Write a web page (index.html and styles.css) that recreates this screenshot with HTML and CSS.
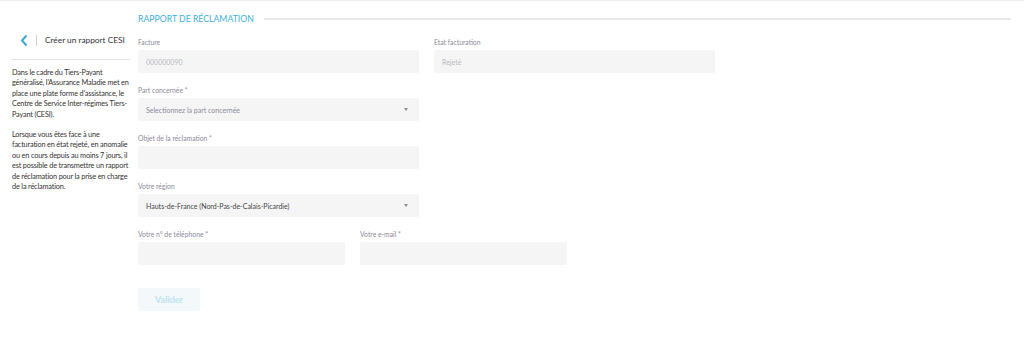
FILE: index.html
```html
<!DOCTYPE html>
<html lang="fr">
<head>
    <meta charset="UTF-8">
    <meta name="viewport" content="width=device-width, initial-scale=1.0">
    <title>Rapport de réclamation</title>
    <link rel="stylesheet" href="styles.css">
</head>
<body>
    <div class="page">
        <aside class="sidebar">
            <div class="sidebar-head">
                <a class="back" href="#">
                    <svg width="8" height="13" viewBox="0 0 8 13"><path d="M6.5 1.5 L2 6.5 L6.5 11.5" fill="none" stroke="#3ea6d6" stroke-width="2"/></svg>
                </a>
                <span class="sep"></span>
                <span class="sidebar-title">Créer un rapport CESI</span>
            </div>
            <p>Dans le cadre du Tiers-Payant généralisé, l'Assurance Maladie met en place une plate forme d'assistance, le Centre de Service Inter-régimes Tiers-Payant (CESI).</p>
            <p>Lorsque vous êtes face à une facturation en état rejeté, en anomalie ou en cours depuis au moins 7 jours, il est possible de transmettre un rapport de réclamation pour la prise en charge de la réclamation.</p>
        </aside>

        <main class="content">
            <h1 class="section-title"><span>RAPPORT DE RÉCLAMATION</span></h1>

            <form class="form-grid">
                <div class="field span-4">
                    <label>Facture</label>
                    <input type="text" value="000000090" disabled>
                </div>
                <div class="field span-4">
                    <label>Etat facturation</label>
                    <input type="text" value="Rejeté" disabled>
                </div>

                <div class="field span-4 row-start">
                    <label>Part concernée *</label>
                    <div class="select placeholder">Selectionnez la part concernée</div>
                </div>

                <div class="field span-4 row-start">
                    <label>Objet de la réclamation *</label>
                    <input type="text">
                </div>

                <div class="field span-4 row-start">
                    <label>Votre région</label>
                    <div class="select">Hauts-de-France (Nord-Pas-de-Calais-Picardie)</div>
                </div>

                <div class="field span-3 row-start">
                    <label>Votre n° de téléphone *</label>
                    <input type="text">
                </div>
                <div class="field span-3">
                    <label>Votre e-mail *</label>
                    <input type="text">
                </div>

                <div class="actions row-start">
                    <button type="button" disabled>Valider</button>
                </div>
            </form>
        </main>
    </div>
</body>
</html>
```

FILE: styles.css
```css
html, body {
    margin: 0;
    padding: 0;
}
body {
    font-family: Lato, "Open Sans", sans-serif;
    color: #3a3a3a;
    background: #fff;
    border-top: 1px solid #ececec;
}
.page {
    display: flex;
    gap: 8px;
    padding: 0 13px 0 12px;
}
.sidebar {
    width: 118px;
    flex-shrink: 0;
    padding-top: 32px;
}
.sidebar-head {
    display: flex;
    align-items: center;
    height: 14px;
    padding: 0 0 12px 8px;
    border-bottom: 1px solid #e3e3e3;
}
.back {
    display: flex;
}
.sep {
    width: 1px;
    height: 11px;
    background: #cfcfcf;
    margin: 0 8px;
}
.sidebar-title {
    font-size: 8.3px;
    white-space: nowrap;
    color: #333;
}
.sidebar p {
    font-size: 7.3px;
    line-height: 10.4px;
    letter-spacing: -0.16px;
    margin: 8px -2px 10px 0;
    color: #333;
}
.content {
    flex: 1;
    min-width: 0;
}
.section-title {
    display: flex;
    align-items: center;
    gap: 10px;
    margin: 0;
    padding-top: 12px;
    font-size: 8.7px;
    line-height: 12px;
    font-weight: 400;
    color: #3fb0da;
}
.section-title::after {
    content: "";
    flex: 1;
    height: 2px;
    background: #e8e8e8;
}
.form-grid {
    display: grid;
    grid-template-columns: repeat(12, minmax(0, 1fr));
    column-gap: 15px;
    row-gap: 13px;
    margin-top: 13px;
}
.field {
    display: flex;
    flex-direction: column;
}
.span-4 { grid-column-end: span 4; }
.span-3 { grid-column-end: span 3; }
.row-start { grid-column-start: 1; }
.field label {
    font-size: 6.8px;
    line-height: 9px;
    color: #8d8a9b;
    margin-bottom: 3px;
}
.field input,
.select {
    box-sizing: border-box;
    height: 23px;
    border: none;
    border-radius: 2px;
    background: #f5f5f5;
    font-family: inherit;
    font-size: 7px;
    padding: 0 8px;
    color: #444;
    outline: none;
    white-space: nowrap;
}
.field input:disabled {
    color: #b9b9c3;
}
.select {
    display: flex;
    align-items: center;
    position: relative;
}
.select.placeholder {
    color: #8d8a9b;
}
.select::after {
    content: "";
    position: absolute;
    right: 11px;
    top: 10px;
    border-left: 2.5px solid transparent;
    border-right: 2.5px solid transparent;
    border-top: 3px solid #8d8a9b;
}
.actions {
    grid-column-end: span 2;
    margin-top: 9px;
}
.actions button {
    width: 62px;
    height: 23px;
    border: none;
    border-radius: 2px;
    background: #f3f9fb;
    color: #bfe2f0;
    font-family: inherit;
    font-weight: 700;
    font-size: 9px;
    cursor: not-allowed;
}
```
